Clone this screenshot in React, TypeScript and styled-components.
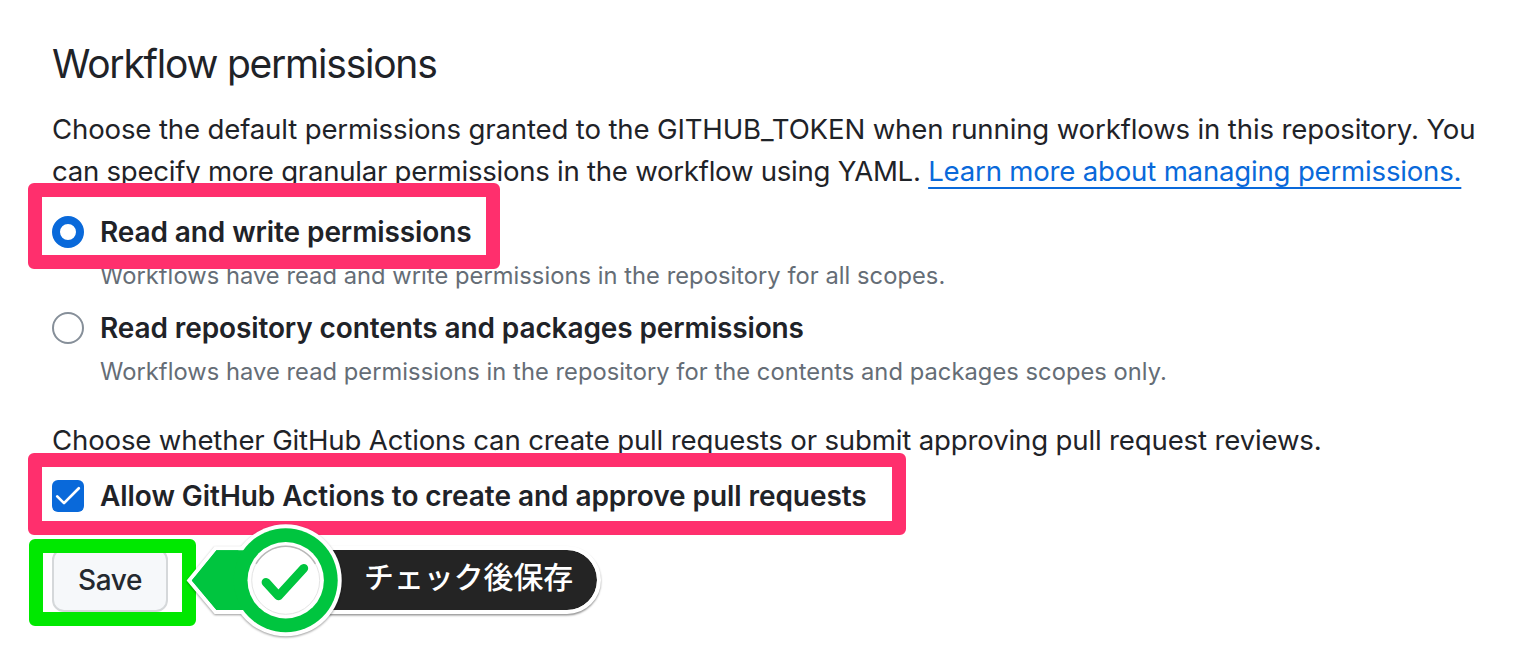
import React from "react";
import styled, { createGlobalStyle } from "styled-components";

const GlobalStyle = createGlobalStyle`
  * { box-sizing: border-box; }
  body { margin: 0; background: #fff; }
`;

const Page = styled.main`
  display: flex;
  flex-direction: column;
  align-items: flex-start;
  width: 1516px;
  height: 650px;
  padding: 34px 0 0 52px;
  overflow: hidden;
  color: #1f2328;
  font-family: Inter, "Liberation Sans", sans-serif;
  font-size: 27.6px;
  font-weight: 400;
  line-height: 42px;
  white-space: nowrap;
`;

const Heading = styled.h2`
  margin: 0 0 14px;
  font-size: 39px;
  font-weight: 400;
  line-height: 60px;
  letter-spacing: -1.23px;
`;

const Text = styled.p<{ $spacing?: number }>`
  margin: 0;
  letter-spacing: ${(p) => p.$spacing ?? 0}px;
`;

const Line = styled.span<{ $spacing: number }>`
  display: block;
  letter-spacing: ${(p) => p.$spacing}px;
`;

const Link = styled.a`
  color: #0969da;
  letter-spacing: -0.2px;
  text-decoration: underline;
  text-decoration-thickness: 2px;
  text-decoration-skip-ink: none;
  text-underline-offset: 6px;
`;

const Options = styled.div`
  display: flex;
  flex-direction: column;
  gap: 12px;
  margin: 19px 0 28px;
`;

const Option = styled.div`
  display: flex;
  flex-direction: column;
  align-items: flex-start;
  gap: 5px;
  height: 84px;
`;

const Choice = styled.label<{ $offset?: number }>`
  position: relative;
  display: flex;
  align-items: center;
  gap: 16px;
  height: 42px;
  margin-top: ${(p) => p.$offset ?? 0}px;
`;

const Radio = styled.span<{ $checked?: boolean }>`
  width: 32px;
  height: 32px;
  border-radius: 50%;
  background: #fff;
  border: ${(p) => (p.$checked ? "8px solid #0969da" : "2px solid #868f99")};
`;

const CheckBox = styled.span`
  display: flex;
  width: 32px;
  height: 32px;
  border-radius: 6px;
  background: #0969da;
`;

const Label = styled.span<{ $spacing: number }>`
  font-size: 28px;
  font-weight: 600;
  letter-spacing: ${(p) => p.$spacing}px;
`;

const Hint = styled.p<{ $spacing: number }>`
  margin: 0 0 0 48px;
  color: #656d76;
  font-size: 23.7px;
  line-height: 36px;
  letter-spacing: ${(p) => p.$spacing}px;
`;

const Frame = styled.span<{
  $color: string;
  $top: number;
  $left: number;
  $width: number;
  $height: number;
}>`
  position: absolute;
  z-index: 1;
  top: ${(p) => p.$top}px;
  left: ${(p) => p.$left}px;
  width: ${(p) => p.$width}px;
  height: ${(p) => p.$height}px;
  border: 14px solid ${(p) => p.$color};
  border-radius: 6px;
  pointer-events: none;
`;

const Actions = styled.div`
  position: relative;
  display: flex;
  margin-top: 31px;
`;

const SaveButton = styled.button`
  width: 116px;
  height: 64px;
  padding: 0;
  border: 2px solid #d5d8da;
  border-radius: 12px;
  background: #f6f8fa;
  color: #24292f;
  font: 500 28px/40px Inter, "Liberation Sans", sans-serif;
  letter-spacing: -0.4px;
`;

const Callout = styled.div`
  position: absolute;
  z-index: 2;
  top: -29px;
  left: 128px;
  width: 430px;
  height: 124px;
`;

const CalloutLabel = styled.div`
  position: absolute;
  top: 27px;
  left: 100px;
  display: flex;
  align-items: center;
  width: 321px;
  height: 68px;
  padding: 0 0 11px 80px;
  border: 4px solid #fff;
  border-radius: 34px;
  background: #242424;
  background-clip: padding-box;
  box-shadow: 0 1.5px 2px rgba(0, 0, 0, 0.42);
  color: #fff;
  font: 500 29.9px/44px "Noto Sans CJK JP", sans-serif;
`;

const CalloutArt = styled.svg`
  position: absolute;
  inset: 0;
  filter: drop-shadow(0 1.5px 1px rgba(0, 0, 0, 0.4));
`;

const GREEN = "#00c53f";

function Badge() {
  return (
    <CalloutArt width="170" height="124" viewBox="180 519 170 124" fill="none">
      <path
        d="M216.5 550.3 L191.8 580.4 L216.5 610 H286 V550.3 Z"
        fill={GREEN}
        stroke="#fff"
        strokeWidth="8"
        paintOrder="stroke"
      />
      <circle cx="285.7" cy="580.3" r="56" fill="#fff" />
      <path d="M216.5 550.3 L191.8 580.4 L216.5 610 H250 V550.3 Z" fill={GREEN} />
      <circle cx="285.7" cy="580.3" r="52" fill={GREEN} />
      <circle cx="285.7" cy="580.3" r="38.2" fill="#fff" />
      <circle cx="285.7" cy="580.3" r="34" stroke="#e4e4e4" />
      <path d="M256 563.8 A34 34 0 0 1 315.4 563.8" stroke="#b8b8b8" strokeWidth="1.5" />
      <path
        d="M266 582.3 L278.4 595.9 L303.8 568.3"
        stroke={GREEN}
        strokeWidth="8.8"
        strokeLinecap="round"
        strokeLinejoin="round"
      />
    </CalloutArt>
  );
}

export default function App() {
  return (
    <>
      <GlobalStyle />
      <Page>
        <Heading>Workflow permissions</Heading>
        <Text>
          <Line $spacing={-0.155}>
            Choose the default permissions granted to the GITHUB_TOKEN when running workflows in this repository. You
          </Line>
          <Line $spacing={-0.26}>
            can specify more granular permissions in the workflow using YAML.{" "}
            <Link>Learn more about managing permissions.</Link>
          </Line>
        </Text>
        <Options>
          <Option>
            <Choice>
              <Radio $checked />
              <Label $spacing={-0.1}>Read and write permissions</Label>
              <Frame $color="#ff2f6d" $top={-28} $left={-24.5} $width={472.5} $height={85.5} />
            </Choice>
            <Hint $spacing={0.045}>Workflows have read and write permissions in the repository for all scopes.</Hint>
          </Option>
          <Option>
            <Choice>
              <Radio />
              <Label $spacing={-0.11}>Read repository contents and packages permissions</Label>
            </Choice>
            <Hint $spacing={0.05}>
              Workflows have read permissions in the repository for the contents and packages scopes only.
            </Hint>
          </Option>
        </Options>
        <Text $spacing={-0.16}>
          Choose whether GitHub Actions can create pull requests or submit approving pull request reviews.
        </Text>
        <Choice $offset={14}>
          <CheckBox>
            <svg width="32" height="32" viewBox="0 0 32 32" fill="none">
              <path
                d="M5.2 16.4 L12 23.1 L26.8 8.3"
                stroke="#fff"
                strokeWidth="2.7"
                strokeLinecap="round"
                strokeLinejoin="round"
              />
            </svg>
          </CheckBox>
          <Label $spacing={-0.06}>Allow GitHub Actions to create and approve pull requests</Label>
          <Frame $color="#ff2f6d" $top={-22} $left={-24.5} $width={878.5} $height={82} />
        </Choice>
        <Actions>
          <SaveButton>Save</SaveButton>
          <Frame $color="#00e800" $top={-9} $left={-23} $width={167.3} $height={87.3} />
          <Callout>
            <CalloutLabel>チェック後保存</CalloutLabel>
            <Badge />
          </Callout>
        </Actions>
      </Page>
    </>
  );
}
